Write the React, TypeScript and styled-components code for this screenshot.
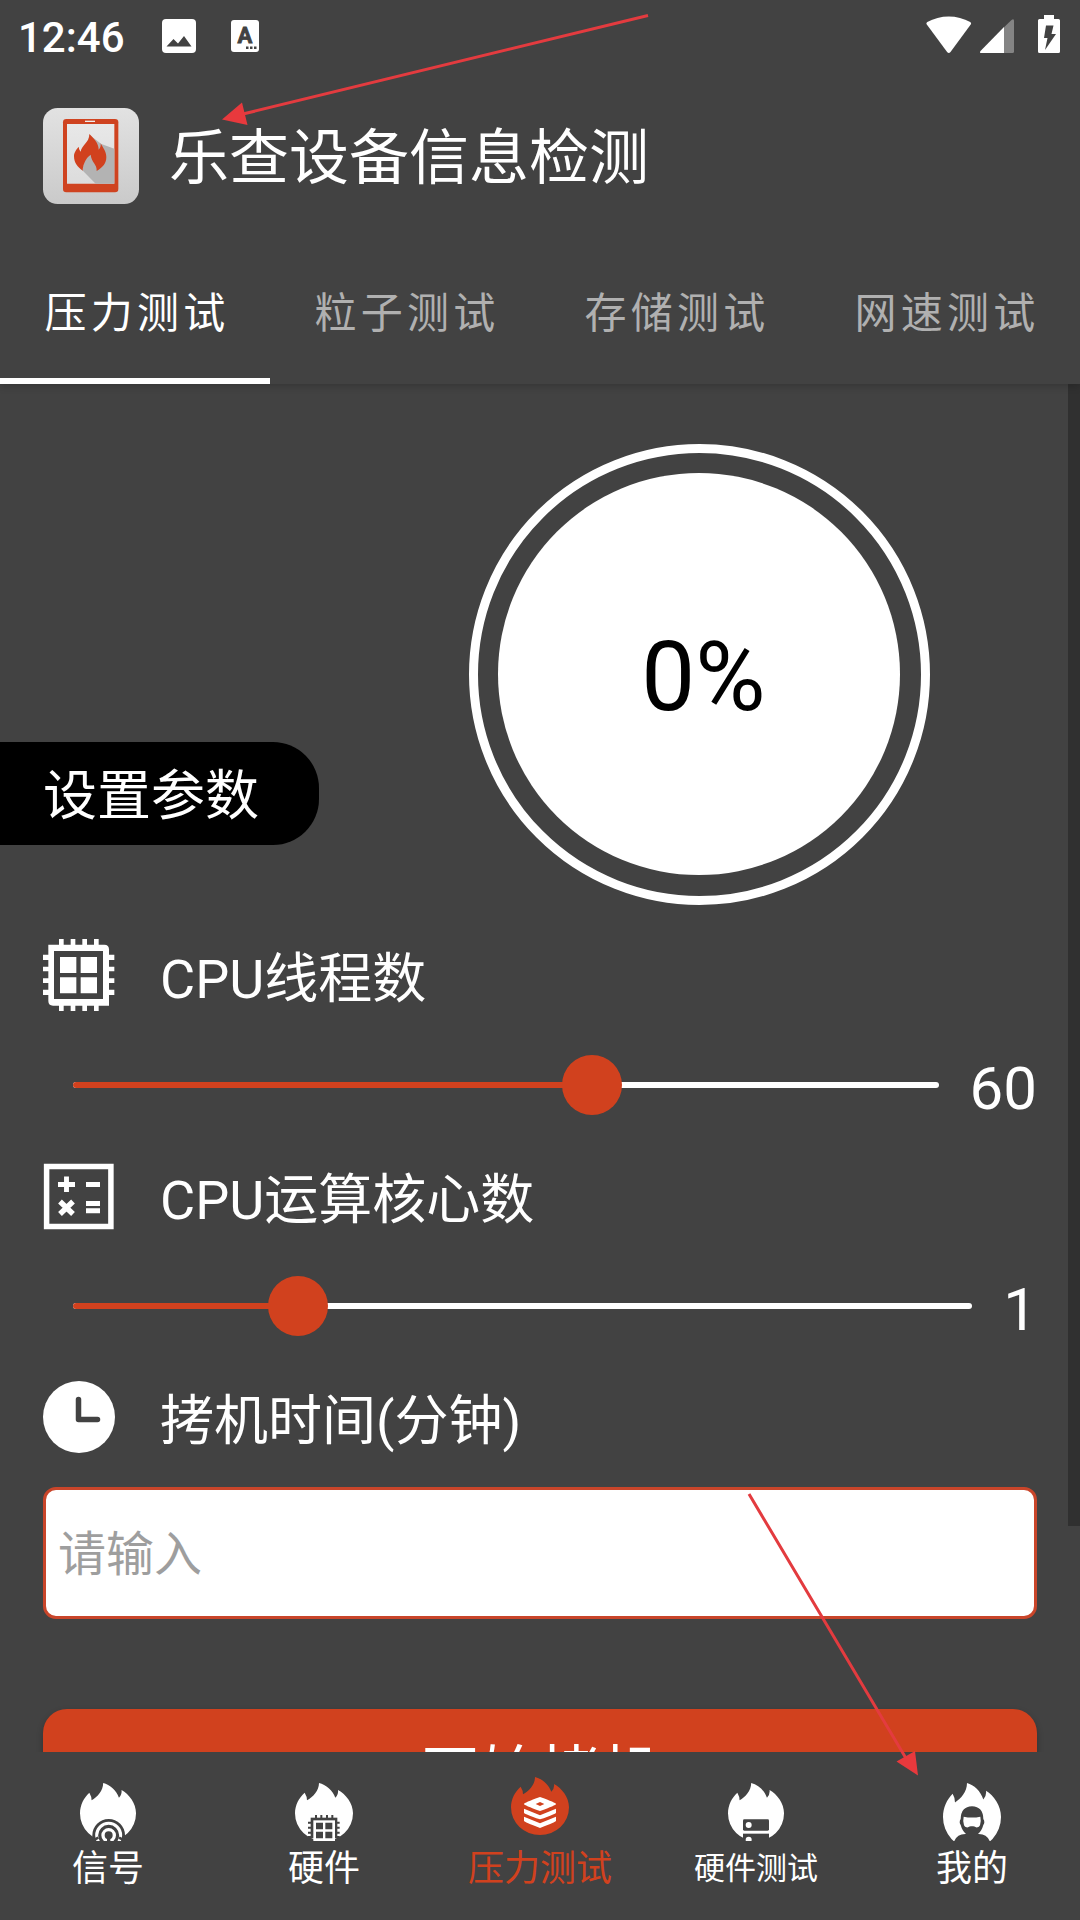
import React, { useState } from "react";
import styled, { createGlobalStyle } from "styled-components";

const bg = "#424242";
const accent = "#d1411e";

const GlobalStyle = createGlobalStyle`
  * { box-sizing: border-box; }
  body { margin: 0; background: ${bg}; }
  button, input { font: inherit; border: 0; padding: 0; margin: 0; }
`;

const Screen = styled.div`
  position: relative;
  width: 1080px;
  height: 1920px;
  display: flex;
  flex-direction: column;
  overflow: hidden;
  background: ${bg};
  color: #fff;
  font-family: Roboto, "Noto Sans CJK SC", sans-serif;
`;

const StatusBar = styled.header`
  display: flex;
  align-items: center;
  height: 72px;
  padding: 0 19px 0 18px;
`;

const Clock = styled.span`
  width: 144px;
  font-size: 42px;
  font-weight: 500;
  line-height: 72px;
  padding-top: 4px;
`;

const StatusIcons = styled.div`
  display: flex;
  align-items: center;
  gap: 35px;
`;

const SystemIcons = styled.div`
  display: flex;
  align-items: flex-end;
  height: 39px;
  margin: 0 0 3px auto;
`;

const TitleBar = styled.div`
  display: flex;
  align-items: center;
  gap: 30px;
  height: 168px;
  padding: 0 43px 0 43px;
`;

const Title = styled.h1`
  margin: 0;
  padding-top: 6px;
  font-size: 60px;
  font-weight: 400;
  line-height: 88px;
`;

const Tabs = styled.nav`
  position: relative;
  z-index: 1;
  display: grid;
  grid-template-columns: repeat(4, 1fr);
  height: 144px;
  background: ${bg};
  box-shadow: 0 2px 8px rgba(0, 0, 0, 0.2);
  clip-path: inset(0 0 -16px 0);
`;

const Tab = styled.button<{ $active: boolean }>`
  background: none;
  border-bottom: 6px solid ${(p) => (p.$active ? "#fff" : "transparent")};
  color: ${(p) => (p.$active ? "#fff" : "#b0b0b0")};
  font-size: 42px;
  line-height: 62px;
  letter-spacing: 4.2px;
  padding: 9px 0 0 4px;
`;

const Content = styled.main`
  position: relative;
  flex: 1;
  min-height: 0;
  overflow: hidden;
  display: flex;
  flex-direction: column;
`;

const ScrollThumb = styled.div`
  position: absolute;
  top: 0;
  right: 0;
  width: 12px;
  height: 1142px;
  background: #303030;
`;

const Hero = styled.section`
  display: flex;
  gap: 150px;
  height: 521px;
  flex: none;
`;

const SectionPill = styled.h2`
  margin: 358px 0 0;
  width: 319px;
  height: 103px;
  padding: 3px 0 0 43px;
  border-radius: 0 46px 46px 0;
  background: #000;
  font-size: 54px;
  font-weight: 400;
  line-height: 100px;
  line-height: 103px;
`;

const Gauge = styled.div`
  width: 461px;
  height: 461px;
  margin-top: 60px;
  padding: 20px;
  border: 9px solid #fff;
  border-radius: 50%;
`;

const GaugeFace = styled.div`
  display: flex;
  align-items: center;
  justify-content: center;
  height: 402px;
  width: 402px;
  padding: 6px 0 0 9px;
  border-radius: 50%;
  background: #fff;
  color: #000;
  font-size: 96px;
`;

const Setting = styled.section`
  flex: none;
  display: flex;
  flex-direction: column;
  gap: 37px;
  padding: 0 43px;
  margin-top: 34px;

  & + & { margin-top: 38px; }
`;

const SettingHead = styled.div`
  display: flex;
  align-items: center;
  gap: 45px;
  height: 72px;
`;

const SettingLabel = styled.span`
  font-size: 54px;
  line-height: 80px;
  padding-top: 9px;
`;

const SliderRow = styled.div`
  display: flex;
  align-items: center;
  gap: 31px;
  height: 74px;
  padding-left: 30px;
`;

const Track = styled.div`
  flex: 1;
  display: flex;
  align-items: center;
  height: 6px;
  border-radius: 3px;
  background: #fff;
`;

const Fill = styled.div`
  height: 6px;
  border-radius: 3px 0 0 3px;
  background: ${accent};
`;

const Thumb = styled.div`
  flex: none;
  width: 60px;
  height: 60px;
  margin-left: -30px;
  border-radius: 50%;
  background: ${accent};
`;

const Value = styled.span`
  font-size: 60px;
  line-height: 74px;
  padding-top: 8px;
`;

const MinutesInput = styled.input`
  flex: none;
  width: 994px;
  height: 132px;
  margin: 34px 43px 0;
  padding: 3px 12px 0;
  border: 3px solid #c9452a;
  border-radius: 13px;
  background: #fff;
  color: #000;
  font-size: 48px;

  &::placeholder { color: #9e9e9e; opacity: 1; }
`;

const StartButton = styled.button`
  flex: none;
  height: 132px;
  margin: 90px 43px 0;
  border-radius: 24px;
  background: ${accent};
  color: #fff;
  font-size: 60px;
  line-height: 88px;
  box-shadow: 0 3px 6px rgba(0, 0, 0, 0.25);
`;

const BottomNav = styled.nav`
  display: grid;
  grid-template-columns: repeat(5, 1fr);
  height: 168px;
  background: ${bg};
`;

const NavItem = styled.button<{ $active: boolean }>`
  display: flex;
  flex-direction: column;
  align-items: center;
  padding-top: ${(p) => (p.$active ? 25 : 31)}px;
  background: none;
  color: ${(p) => (p.$active ? accent : "#fff")};
`;

const NavLabel = styled.span<{ $small?: boolean; $active: boolean }>`
  margin-top: ${(p) => (p.$active ? 7 : 1)}px;
  font-size: ${(p) => (p.$small ? 31 : 36)}px;
  line-height: 54px;
  white-space: nowrap;
`;

const Annotations = styled.svg`
  position: absolute;
  inset: 0;
  z-index: 2;
  pointer-events: none;
`;

const ImageIcon = () => (
  <svg width="34" height="34" viewBox="0 0 34 34">
    <rect width="34" height="34" rx="4" fill="#fff" />
    <path d="M4.5 27.5 11.5 20l4.5 4.5L22 17l7.5 10.500z" fill={bg} />
  </svg>
);

const KeyboardIcon = () => (
  <svg width="28" height="32" viewBox="0 0 28 32">
    <rect width="28" height="32" rx="3" fill="#fff" />
    <text x="14" y="23" textAnchor="middle" fontFamily="Roboto, sans-serif" fontWeight="700" fontSize="22" fill={bg} stroke={bg} strokeWidth="0.8">A</text>
    <path d="M15 26.500h2.500v2.500H15zM19 26.500h2.500v2.500H19zM23 26.500h2.500v2.500H23z" fill={bg} />
  </svg>
);

const SystemStatus = () => (
  <svg width="135" height="39" viewBox="0 0 135 39">
    <path d="M.8 9.500Q-.2 8 1.300 7C14-.5 31.500-.5 44.200 7q1.500 1 .5 2.500L24.500 37q-1.700 2-3.400 0z" fill="#fff" />
    <path d="M78 12v26H55.500q-2.500 0-1-2z" fill="#fff" />
    <path d="M78 12.300 85.500 5q2.500-2 2.500 1v30.500q0 1.500-1.500 1.500H78z" fill="#848484" />
    <path d="M118 0h10v4h4.500q1.500 0 1.500 1.500v31q0 1.500-1.500 1.500h-19q-1.500 0-1.500-1.500v-31Q112 4 113.500 4h4.500z" fill="#fff" />
    <path d="M120 10.500h7.500l-2 8.500h4.500L119 35l2.500-12H118z" fill={bg} />
  </svg>
);

const AppLogo = () => (
  <svg width="96" height="96" viewBox="0 0 288 288">
    <defs>
      <linearGradient id="tile" x1="0" y1="0" x2="0" y2="1">
        <stop offset="0" stopColor="#e2e2e2" />
        <stop offset="1" stopColor="#cacaca" />
      </linearGradient>
      <linearGradient id="glass" x1="0" y1="0" x2="0" y2="1">
        <stop offset="0" stopColor="#e8e8e8" />
        <stop offset="1" stopColor="#dcdcdc" />
      </linearGradient>
    </defs>
    <rect width="288" height="288" rx="44" fill="url(#tile)" />
    <rect x="60" y="33" width="166" height="220" rx="10" fill="#cf4320" />
    <path d="M126 40h30" stroke="#eee" strokeWidth="4" />
    <path d="M72 48h142v179H72z" fill="url(#glass)" />
    <path d="m139 80 36 28 39 14v105h-56l-40-40z" fill="#b3b3b3" />
    <path d="M139 78c12 12 28 27 28 47 5-5 7-12 6-19 6 12 17 25 17 41 0 20-12 32-29 42 1-22-15-24-18-49-12 8-23 26-24 48-15-10-26-24-26-43 0-13 8-21 14-29 1 6 2 10 6 15 2-19 27-28 26-53z" fill={accent} />
  </svg>
);

const ChipIcon = () => (
  <svg width="72" height="72" viewBox="0 0 216 216">
    <path d="M48 0h14v216H48zM83 0h14v216H83zM118 0h14v216h-14zM153 0h14v216h-14zM0 47h214v16H0zM0 83h214v14H0zM0 118h214v14H0zM0 152h214v16H0z" fill="#fff" />
    <path d="M16 17h168q14 0 14 14v169H30q-14 0-14-14z" fill="#fff" />
    <path d="M33 36h147v144H33z" fill={bg} />
    <path d="M51 54h49v48H51zM113 54h49v48h-49zM51 115h49v48H51zM113 115h49v48h-49z" fill="#fff" />
  </svg>
);

const CalcIcon = () => (
  <svg width="72" height="72" viewBox="0 0 72 72" fill="none" stroke="#fff">
    <path d="M3.600 6.600h64.300v59.800H3.600z" strokeWidth="5.500" />
    <path d="M15 24.500h17M23.500 16.500v15.500M43 24.500h14M43 43.500h14M43 50.800h14" strokeWidth="4.900" />
    <path d="m17 41.500 13 12.500M30 41.500 17 54" strokeWidth="5.400" />
  </svg>
);

const TimeIcon = () => (
  <svg width="72" height="72" viewBox="0 0 72 72">
    <circle cx="36" cy="36" r="36" fill="#fff" />
    <path d="M35.500 18.500v20h19" fill="none" stroke={bg} strokeWidth="5.500" strokeLinecap="round" strokeLinejoin="round" />
  </svg>
);

const flame =
  "M72 0C93 5 113 22 121 44Q131 34 129 21C153 34 174 61 174 91A87 83 0 0 1 0 91C0 66 12 44 29 29Q36 40 36 52C54 42 72 23 72 0Z";

type NavKind = "signal" | "chip" | "stress" | "drive" | "me";

const NavIcon = ({ kind }: { kind: NavKind }) => {
  const scale = kind === "me" ? "scale(1 1.12)" : kind === "signal" || kind === "drive" ? "translate(3 0) scale(.966 1)" : undefined;
  return (
    <svg width="58" height="58" viewBox="0 0 174 174">
      <path d={flame} transform={scale} fill="currentColor" />
      {kind === "signal" && (
        <g fill="none">
          <circle cx="89" cy="157" r="49" fill={bg} />
          <circle cx="89" cy="157" r="36" stroke="#fff" strokeWidth="9" />
          <circle cx="89" cy="157" r="17" stroke="#fff" strokeWidth="10" />
          <path d="M89 157v17" stroke={bg} strokeWidth="10" />
          <path d="M36 175 58 164M142 175 120 164" stroke={bg} strokeWidth="8" />
        </g>
      )}
      {kind === "chip" && (
        <g>
          <path d="M47 104h80v62H47z" fill={bg} />
          <path d="M63 96v70M79 96v70M96 96v70M112 96v70M39 119h95M39 134h95M39 149h95M39 162h95" stroke={bg} strokeWidth="6" />
          <path d="M55 112h65v62H55z" fill="#fff" />
          <path d="M63 119h21v20H63zM91 119h21v20H91zM63 146h21v20H63zM91 146h21v20H91z" fill={bg} />
        </g>
      )}
      {kind === "stress" && (
        <g fill="#fff">
          <path d="M87 60q48 17 48 21t-48 21Q39 85 39 81t48-21zM39 95l48 20 48-20v12q-1 4-48 20-47-16-48-20zM39 119l48 20 48-20v13q-1 3-48 21-47-18-48-21z" />
          <path d="m74 81 13-6 13 6-13 6z" fill={accent} />
        </g>
      )}
      {kind === "drive" && (
        <g fill={bg}>
          <rect x="48" y="109" width="78" height="34" rx="4" />
          <path d="M48 152h78v22H48z" />
          <circle cx="65" cy="126" r="9" fill="#fff" />
          <circle cx="65" cy="170" r="9" fill="#fff" />
        </g>
      )}
      {kind === "me" && (
        <g fill={bg}>
          <path d="M53 108Q54 71 87 70q33 1 34 38 6 10 0 18-5 18-16 27 26-1 35 21H34q9-22 35-21-11-9-16-27-6-8 0-18z" />
          <path d="M62 101q25 5 50 0 3 12-1 26-2 7-12 6-7-5-12-3-5-2-12 3-10 1-12-6-4-14-1-26z" fill="#fff" />
        </g>
      )}
    </svg>
  );
};

const tabs = ["压力测试", "粒子测试", "存储测试", "网速测试"];

const sliders = [
  { label: "CPU线程数", value: 60, position: 60, Icon: ChipIcon },
  { label: "CPU运算核心数", value: 1, position: 25, Icon: CalcIcon },
];

const navItems: { label: string; kind: NavKind; small?: boolean }[] = [
  { label: "信号", kind: "signal" },
  { label: "硬件", kind: "chip" },
  { label: "压力测试", kind: "stress" },
  { label: "硬件测试", kind: "drive", small: true },
  { label: "我的", kind: "me" },
];

export default function App() {
  const [tab, setTab] = useState(0);
  const [page, setPage] = useState<NavKind>("stress");

  return (
    <Screen>
      <GlobalStyle />
      <StatusBar>
        <Clock>12:46</Clock>
        <StatusIcons>
          <ImageIcon />
          <KeyboardIcon />
        </StatusIcons>
        <SystemIcons>
          <SystemStatus />
        </SystemIcons>
      </StatusBar>
      <TitleBar>
        <AppLogo />
        <Title>乐查设备信息检测</Title>
      </TitleBar>
      <Tabs>
        {tabs.map((name, i) => (
          <Tab key={name} $active={i === tab} onClick={() => setTab(i)}>
            {name}
          </Tab>
        ))}
      </Tabs>
      <Content>
        <Hero>
          <SectionPill>设置参数</SectionPill>
          <Gauge>
            <GaugeFace>0%</GaugeFace>
          </Gauge>
        </Hero>
        {sliders.map(({ label, value, position, Icon }) => (
          <Setting key={label}>
            <SettingHead>
              <Icon />
              <SettingLabel>{label}</SettingLabel>
            </SettingHead>
            <SliderRow>
              <Track>
                <Fill style={{ width: `${position}%` }} />
                <Thumb />
              </Track>
              <Value>{value}</Value>
            </SliderRow>
          </Setting>
        ))}
        <Setting>
          <SettingHead>
            <TimeIcon />
            <SettingLabel>拷机时间(分钟)</SettingLabel>
          </SettingHead>
        </Setting>
        <MinutesInput placeholder="请输入" />
        <StartButton>开始拷机</StartButton>
        <ScrollThumb />
      </Content>
      <BottomNav>
        {navItems.map(({ label, kind, small }) => (
          <NavItem key={kind} $active={kind === page} onClick={() => setPage(kind)}>
            <NavIcon kind={kind} />
            <NavLabel $small={small} $active={kind === page}>
              {label}
            </NavLabel>
          </NavItem>
        ))}
      </BottomNav>
      <Annotations width="1080" height="1920" viewBox="0 0 1080 1920">
        <g stroke="#e33b3f" strokeWidth="3" fill="none">
          <path d="M648 15.500 243 114M749 1494l158 266" />
        </g>
        <path d="m222 119.500 20-17 5.500 22.500zM918 1775.500l-21.500-14 18.500-10.500z" fill="#e8393d" />
      </Annotations>
    </Screen>
  );
}
